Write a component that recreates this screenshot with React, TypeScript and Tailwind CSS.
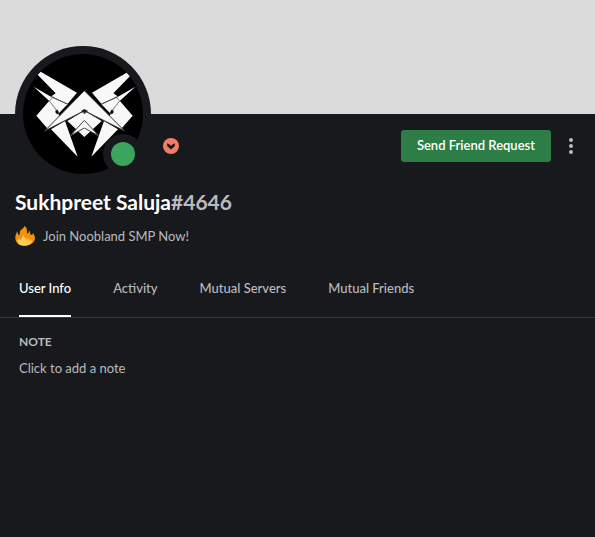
import { useState } from "react"

const tabs = ["User Info", "Activity", "Mutual Servers", "Mutual Friends"]

function WingSide() {
    return (
        <g fill="#f8f8f8" stroke="#555" strokeWidth="2" strokeLinejoin="round">
            <path stroke="none" d="M92 95 L201 158 L173 191 L124 169 L137 160 L83 104 Z" />
            <path stroke="none" d="M71 140 L123 170 L173 193 L145 221 L118 183 Z" />
            <path stroke="none" d="M79 227 L118 182 L145 221 L150 235 L113 266 Z" />
            <path stroke="none" d="M123 268 L165 243 L203 350 Z" />
            <path fill="none" strokeWidth="3" d="M123 170 L173 193" />
            <path fill="none" d="M130 170 L118 183 L148 220" />
            <path fill="#111" stroke="none" d="M136 212 L143 209 L147 219 L142 223 L137 219 Z" />
        </g>
    )
}

function Avatar() {
    return (
        <svg viewBox="39 42 360 360" className="h-full w-full rounded-full bg-black" role="img" aria-label="Avatar">
            <WingSide />
            <g transform="matrix(-1 0 0 1 447 0)">
                <WingSide />
            </g>
            <path fill="#f8f8f8" d="M172 243 L223 212 L275 243 L223 291 Z" />
            <path fill="#f8f8f8" stroke="#444" strokeWidth="3" d="M180 288 L223 241 L267 288 L223 264 Z" />
            <path fill="#f8f8f8" stroke="#333" strokeWidth="3" d="M104 273 L223 152 L344 273 L223 212 Z" />
            <path fill="#222" d="M214 212 L223 207 L233 212 L231 218 L227 216 L226 221 L221 221 L220 216 L216 218 Z" />
        </svg>
    )
}

function Badge() {
    return (
        <svg viewBox="0 0 16 16" className="h-4 w-4" role="img" aria-label="HypeSquad Bravery">
            <circle cx="8" cy="8" r="8" fill="#f47b67" />
            <path fill="#18191c" d="M4 5.2 L7 6.8 L8 8 L9 6.8 L12 5.2 L11.7 8.2 L8 11.5 L4.3 8.2 Z" />
        </svg>
    )
}

function Flame() {
    return (
        <svg viewBox="15 12 60 60" className="h-5 w-5" aria-hidden="true">
            <path
                fill="#f4900c"
                d="M44 71 C27 72 16 61 16 47 C16 39 19 33 23 28 C22 35 24 38 27 39 C31 38 28 29 32 25 C36 21 42 18 43 12 C49 16 51 20 51 27 C51 31 51 34 53 35 C56 34 57 29 56 24 C61 29 60 35 62 38 C67 40 69 36 68 32 C73 38 75 43 75 49 C74 62 61 71 44 71 Z"
            />
            <path
                fill="#ffcc4d"
                d="M45 71 C33 72 23 66 23 57 C23 53 25 50 29 48 C28 54 32 55 34 52 C37 48 36 43 41 38 C41 46 47 47 49 53 C52 54 53 50 52 47 C57 49 57 54 60 57 C64 57 65 54 64 51 C71 60 60 70 45 71 Z"
            />
        </svg>
    )
}

export default function App() {
    const [active, setActive] = useState("User Info")

    return (
        <main className="min-h-screen bg-[#18191c] font-['Lato',sans-serif] text-[13px] text-[#b9bbbe]">
            <div className="h-[114px] bg-[#dbdbdb]" />

            <header className="px-[15px]">
                <div className="flex items-start">
                    <div className="relative -mt-[68px] h-[136px] w-[136px] shrink-0 rounded-full bg-[#18191c] p-2">
                        <Avatar />
                        <div className="absolute right-2 bottom-2 h-10 w-10 rounded-full bg-[#18191c] p-2">
                            <div className="h-6 w-6 rounded-full bg-[#3ba55d]" />
                        </div>
                    </div>
                    <div className="ml-3 flex flex-1 items-center pt-4">
                        <Badge />
                        <button className="ml-auto h-8 rounded-[3px] bg-[#2d7d46] px-4 font-semibold text-white">
                            Send Friend Request
                        </button>
                        <button aria-label="More" className="ml-2 -mr-[3px] flex h-8 w-6 items-center justify-center">
                            <svg viewBox="0 0 4 16" className="h-4 w-1" fill="#b9bbbe">
                                <circle cx="2" cy="2" r="2" />
                                <circle cx="2" cy="8" r="2" />
                                <circle cx="2" cy="14" r="2" />
                            </svg>
                        </button>
                    </div>
                </div>

                <h1 className="mt-2 text-[21px] leading-6 font-bold text-white">
                    Sukhpreet Saluja<span className="text-[#b9bbbe]">#4646</span>
                </h1>
                <div className="mt-3 flex items-center gap-2 leading-5">
                    <Flame />
                    <span>Join Noobland SMP Now!</span>
                </div>
            </header>

            <nav className="mt-4 flex gap-[42px] border-b border-[#37393d] px-[19px]">
                {tabs.map((tab) => (
                    <button
                        key={tab}
                        onClick={() => setActive(tab)}
                        className={
                            "border-b-2 pt-4 pb-[17px] leading-5 font-medium " +
                            (active === tab ? "border-white text-white" : "border-transparent")
                        }
                    >
                        {tab}
                    </button>
                ))}
            </nav>

            <section className="px-[19px] pt-4">
                <h2 className="text-xs leading-4 font-bold">NOTE</h2>
                <button className="mt-2 leading-5">Click to add a note</button>
            </section>
        </main>
    )
}
